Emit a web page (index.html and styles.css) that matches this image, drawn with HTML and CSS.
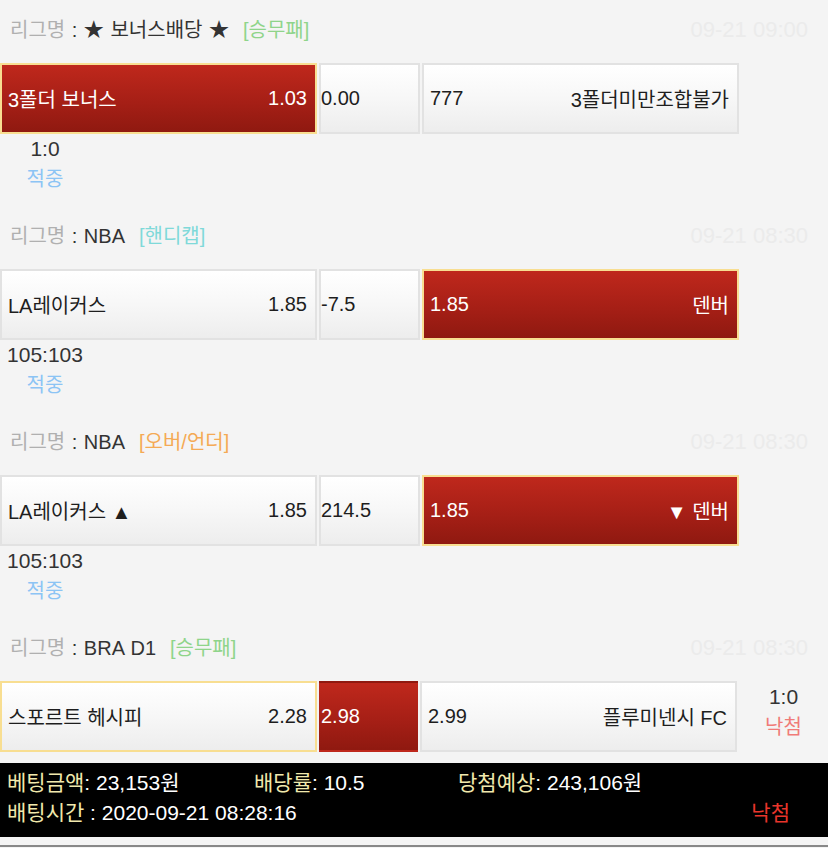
FILE: index.html
```html
<!DOCTYPE html>
<html lang="ko">
<head>
<meta charset="utf-8">
<title>베팅내역</title>
<link rel="stylesheet" href="styles.css">
</head>
<body>
<div class="list">
  <section class="bet first">
    <div class="league"><span class="lbl">리그명</span><span class="name"> : ★ 보너스배당 ★</span><span class="type green">[승무패]</span><span class="date">09-21 09:00</span></div>
    <div class="row">
      <div class="cell team sel"><span>3폴더 보너스</span><span>1.03</span></div>
      <div class="cell mid">0.00</div>
      <div class="cell team"><span>777</span><span>3폴더미만조합불가</span></div>
    </div>
    <div class="result"><div class="score">1:0</div><div class="hit">적중</div></div>
  </section>

  <section class="bet">
    <div class="league"><span class="lbl">리그명</span><span class="name"> : NBA</span><span class="type cyan">[핸디캡]</span><span class="date">09-21 08:30</span></div>
    <div class="row">
      <div class="cell team"><span>LA레이커스</span><span>1.85</span></div>
      <div class="cell mid">-7.5</div>
      <div class="cell team sel"><span>1.85</span><span>덴버</span></div>
    </div>
    <div class="result"><div class="score">105:103</div><div class="hit">적중</div></div>
  </section>

  <section class="bet">
    <div class="league"><span class="lbl">리그명</span><span class="name"> : NBA</span><span class="type orange">[오버/언더]</span><span class="date">09-21 08:30</span></div>
    <div class="row">
      <div class="cell team"><span>LA레이커스 ▲</span><span>1.85</span></div>
      <div class="cell mid">214.5</div>
      <div class="cell team sel"><span>1.85</span><span>▼ 덴버</span></div>
    </div>
    <div class="result"><div class="score">105:103</div><div class="hit">적중</div></div>
  </section>

  <section class="bet">
    <div class="league"><span class="lbl">리그명</span><span class="name"> : BRA D1</span><span class="type green">[승무패]</span><span class="date">09-21 08:30</span></div>
    <div class="row">
      <div class="cell team hover"><span>스포르트 헤시피</span><span>2.28</span></div>
      <div class="cell mid sel-plain narrow">2.98</div>
      <div class="cell team"><span>2.99</span><span>플루미넨시 FC</span></div>
      <div class="result side"><div class="score">1:0</div><div class="miss">낙첨</div></div>
    </div>
  </section>
</div>

<div class="summary">
  <div class="sum-line">
    <span class="item w1"><span class="k">베팅금액</span>: 23,153원</span>
    <span class="item w2"><span class="k">배당률</span>: 10.5</span>
    <span class="item"><span class="k">당첨예상</span>: 243,106원</span>
  </div>
  <div class="sum-line">
    <span class="item"><span class="k">배팅시간</span> : 2020-09-21 08:28:16</span>
    <span class="status">낙첨</span>
  </div>
</div>
<div class="next"></div>
</body>
</html>
```

FILE: styles.css
```css
* { box-sizing: border-box; }
html, body {
  margin: 0;
  padding: 0;
  background: #f4f4f4;
}
body {
  font-family: "Liberation Sans", "Noto Sans CJK KR", sans-serif;
  font-size: 20px;
  color: #1e1e1e;
}
.bet { padding-top: 27px; }
.bet.first { padding-top: 15px; }

.league {
  display: flex;
  align-items: center;
  height: 30px;
  line-height: 30px;
  margin-bottom: 18px;
  padding-left: 10px;
  padding-right: 20px;
  white-space: pre;
}
.lbl { color: #b0b0b0; }
.name { color: #333; word-spacing: 1px; }
.type { margin-left: 14px; }
.green { color: #8fd48a; }
.cyan { color: #7fd9d9; }
.orange { color: #f4aa55; }
.date {
  margin-left: auto;
  font-size: 22px;
  color: #ebebeb;
}

.row {
  display: flex;
  gap: 2px;
  height: 71px;
}
.cell {
  height: 71px;
  display: flex;
  align-items: center;
  border: 2px solid #e2e2e2;
  background: linear-gradient(#ffffff, #f7f7f7 50%, #ededed);
  color: #1e1e1e;
  white-space: nowrap;
}
.team {
  width: 317px;
  justify-content: space-between;
  padding: 0 8px 0 6px;
}
.mid {
  width: 101px;
  padding-left: 0;
}
.mid.narrow { width: 99px; }
.sel {
  border-color: #f8de91;
  background: linear-gradient(#bf281c, #a61f16 55%, #8f1910);
  color: #fff;
}
.hover {
  border-color: #f8de91;
}
.sel-plain {
  border-color: transparent;
  background: linear-gradient(#bf281c, #a61f16 55%, #8f1910);
  color: #fff;
}

.result {
  width: 90px;
  text-align: center;
  line-height: 30px;
}
.result .score {
  font-size: 21px;
  color: #333;
}
.result .hit { color: #8cc4f4; }
.result .miss { color: #f07b78; }
.result.side {
  flex: 1;
  padding-top: 1px;
}

.summary {
  margin-top: 11px;
  background: #000;
  color: #fff;
  padding: 5px 7px 9px;
  line-height: 30px;
  font-size: 21px;
}
.sum-line {
  display: flex;
  white-space: pre;
}
.item.w1 { width: 247px; }
.item.w2 { width: 204px; }
.k { color: #f1e9ad; }
.status {
  margin-left: auto;
  margin-right: 31px;
  color: #e8352b;
}
.next {
  margin-top: 8px;
  border-top: 2px solid #888;
  height: 20px;
}
```
